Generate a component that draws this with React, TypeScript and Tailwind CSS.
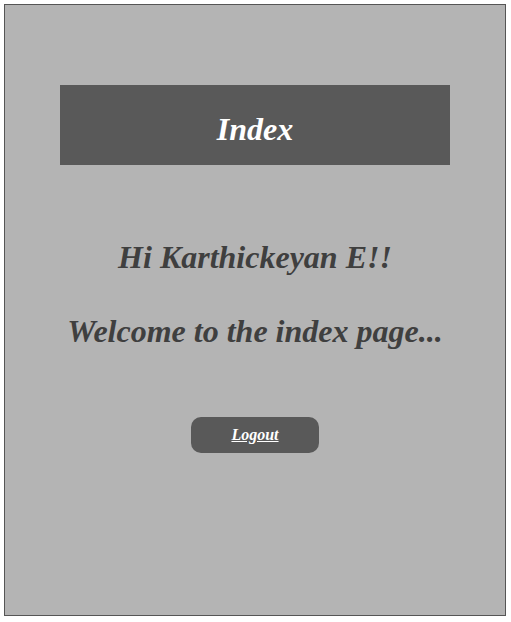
export default function App() {
  return (
    <div className="m-1 w-[502px] h-[612px] border border-[#555555] bg-[#b4b4b4] flex flex-col items-center font-['Liberation_Serif','Times_New_Roman',serif] italic font-bold">
      {/* Header */}
      <div className="mt-[80px] w-[390px] h-[80px] bg-[#595959] flex justify-center pt-[26px]">
        <h1 className="text-[32px] leading-[37px] text-white">Index</h1>
      </div>

      <h1 className="mt-[74px] text-[32px] leading-[37px] text-[#3f3f3f]">Hi Karthickeyan E!!</h1>
      <h1 className="mt-[37px] text-[32px] leading-[37px] text-[#3f3f3f]">Welcome to the index page...</h1>

      <button className="mt-[67px] w-[128px] h-[36px] rounded-[10px] bg-[#595959] flex items-center justify-center">
        <a href="#" className="text-[16px] leading-[18px] text-white underline">Logout</a>
      </button>
    </div>
  );
}
